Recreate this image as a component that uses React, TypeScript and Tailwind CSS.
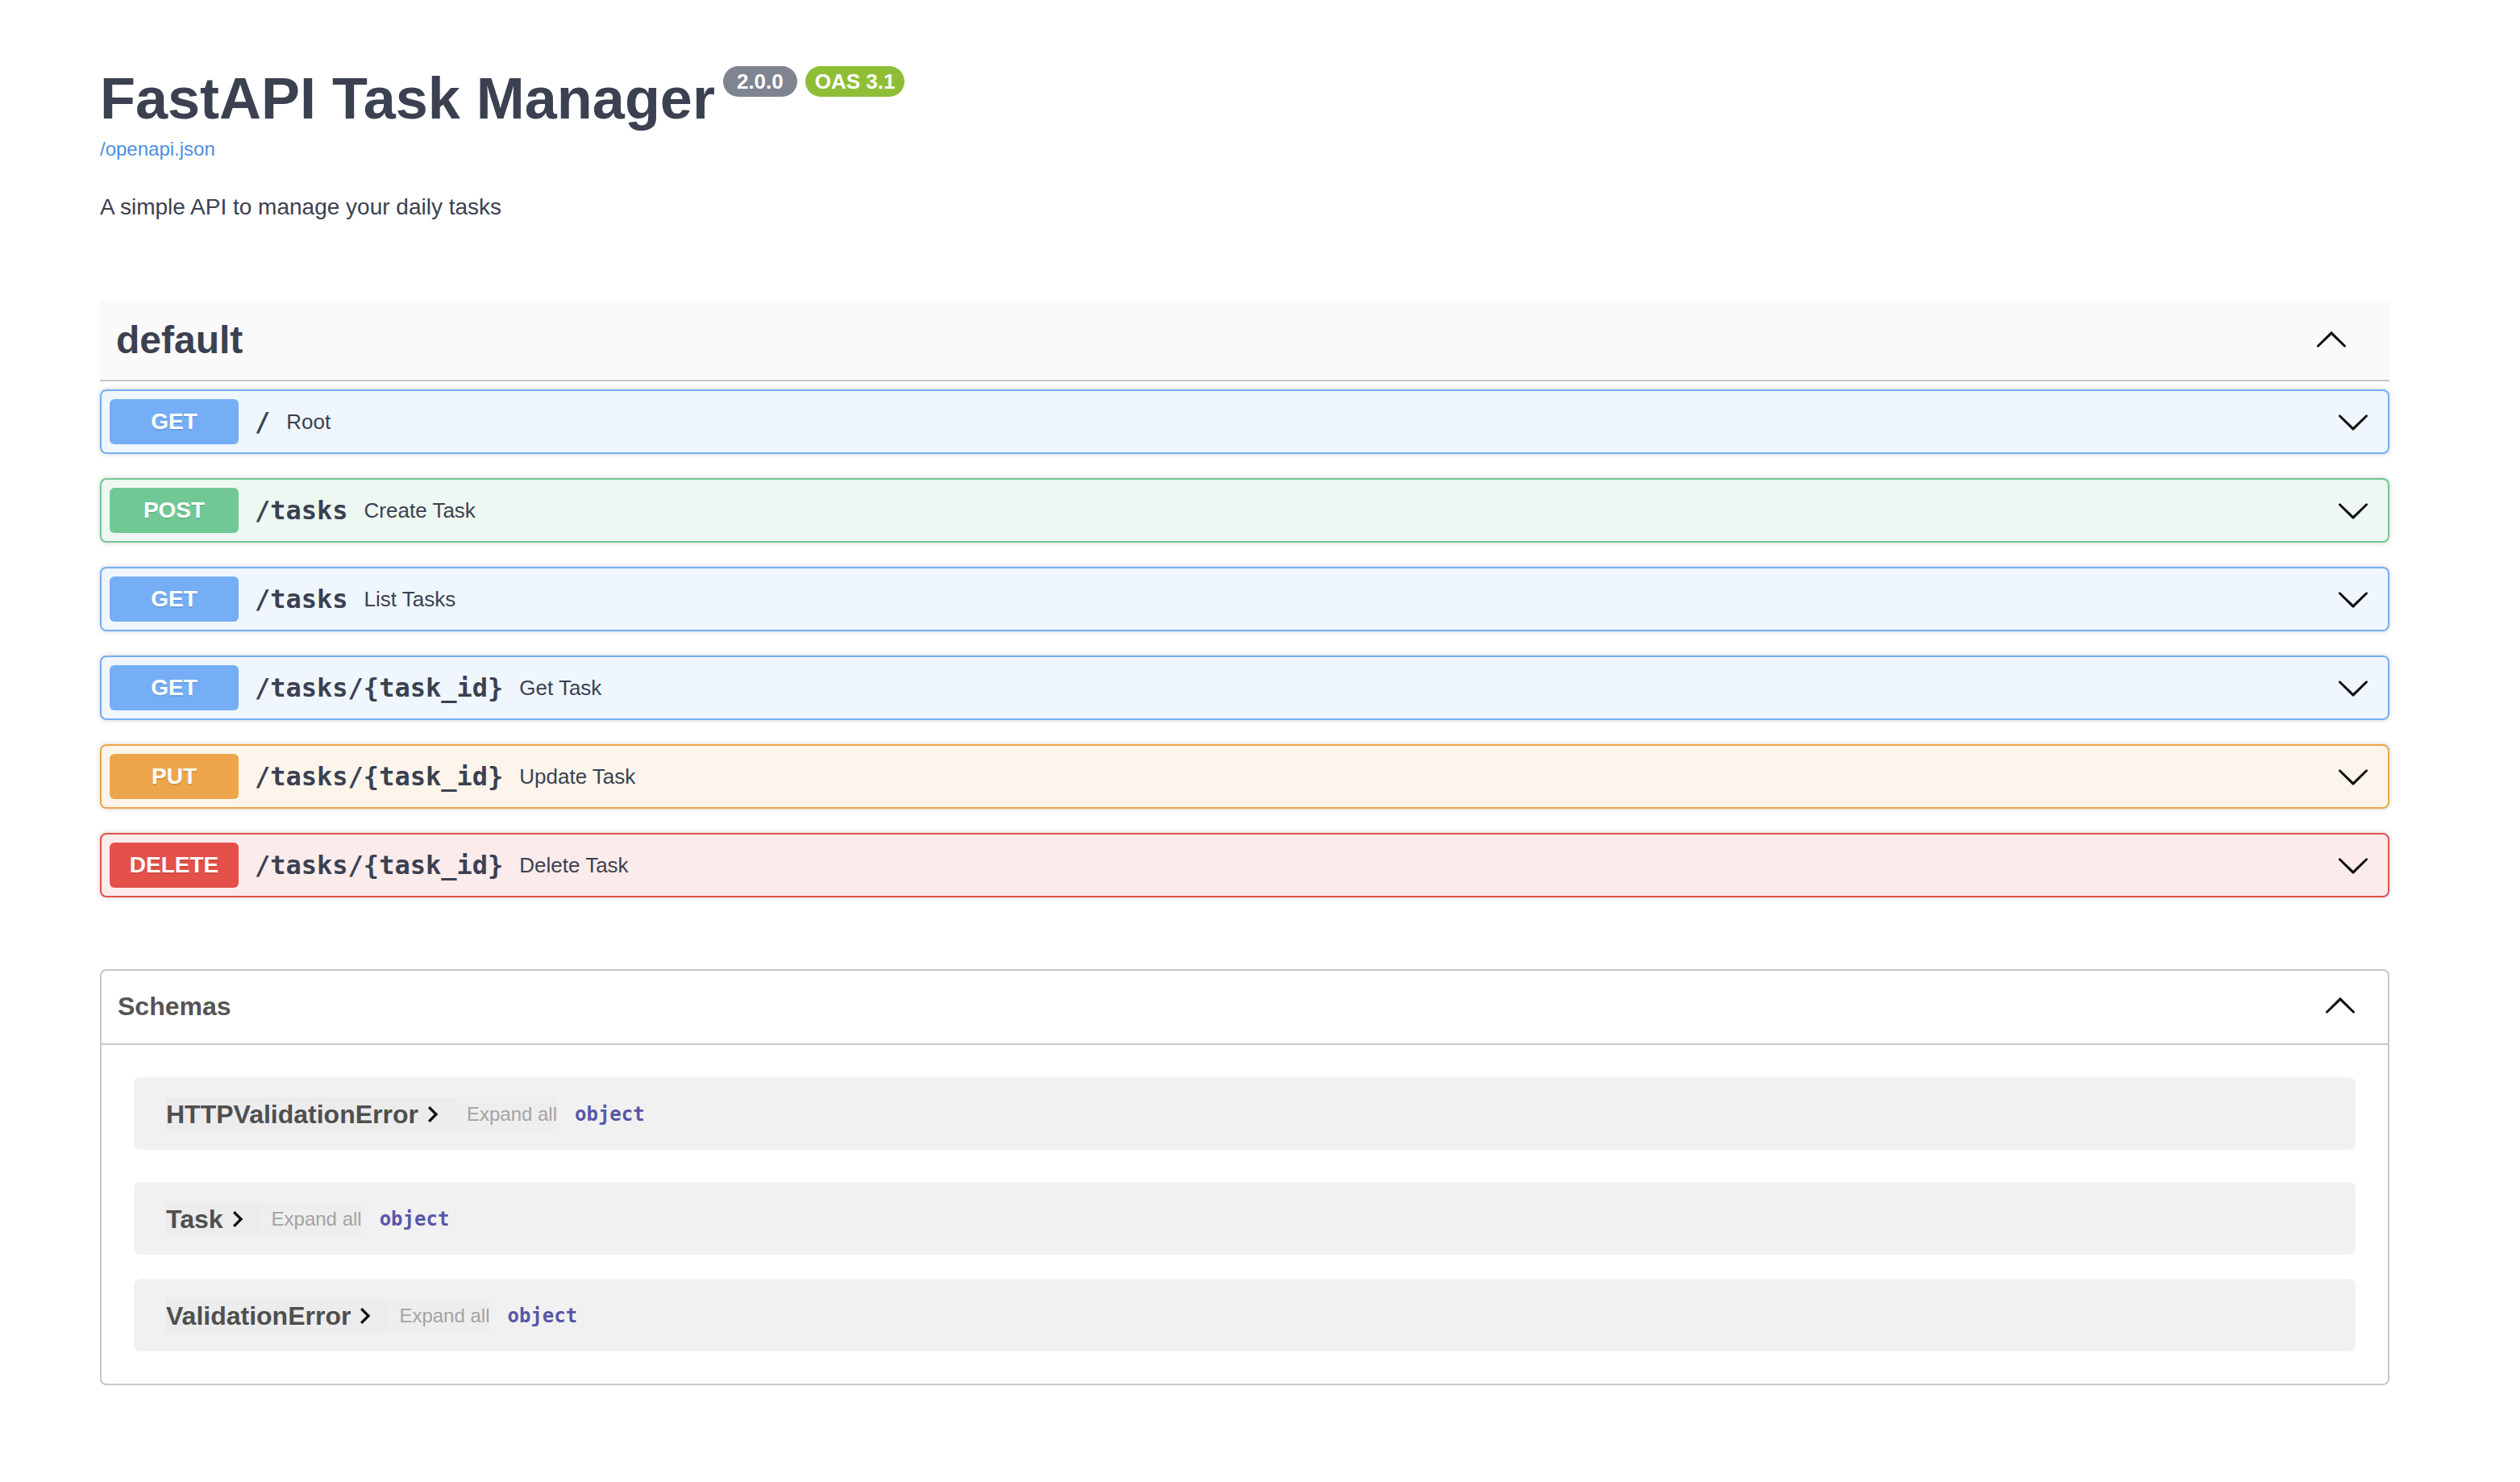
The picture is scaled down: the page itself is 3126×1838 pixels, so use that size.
import React from 'react';

type Method = 'GET' | 'POST' | 'PUT' | 'DELETE';

type Operation = {
  method: Method;
  path: string;
  summary: string;
};

const methodStyles: Record<Method, { block: string; badge: string }> = {
  GET: { block: 'border-[#75aef5] bg-[#eff6fe]', badge: 'bg-[#75aef5]' },
  POST: { block: 'border-[#71c896] bg-[#eef8f2]', badge: 'bg-[#71c896]' },
  PUT: { block: 'border-[#eda54b] bg-[#fdf5eb]', badge: 'bg-[#eda54b]' },
  DELETE: { block: 'border-[#e4504a] bg-[#fbebeb]', badge: 'bg-[#e4504a]' },
};

const operations: Operation[] = [
  { method: 'GET', path: '/', summary: 'Root' },
  { method: 'POST', path: '/tasks', summary: 'Create Task' },
  { method: 'GET', path: '/tasks', summary: 'List Tasks' },
  { method: 'GET', path: '/tasks/{task_id}', summary: 'Get Task' },
  { method: 'PUT', path: '/tasks/{task_id}', summary: 'Update Task' },
  { method: 'DELETE', path: '/tasks/{task_id}', summary: 'Delete Task' },
];

const schemas = ['HTTPValidationError', 'Task', 'ValidationError'];

const Arrow: React.FC<{ up?: boolean; className?: string }> = ({ up = false, className = '' }) => (
  <svg
    viewBox="0 0 20 20"
    className={`w-[42px] h-[42px] shrink-0 ${up ? 'rotate-180' : ''} ${className}`}
    fill="#111"
  >
    <path d="M17.418 6.109c.272-.268.709-.268.979 0s.271.701 0 .969l-7.908 7.83c-.27.268-.707.268-.979 0l-7.908-7.83c-.27-.268-.27-.701 0-.969.271-.268.709-.268.979 0L10 13.25l7.418-7.141z" />
  </svg>
);

const OpBlock: React.FC<{ op: Operation }> = ({ op }) => {
  const s = methodStyles[op.method];
  return (
    <div
      className={`flex items-center h-[80px] border-2 rounded-[8px] px-[10px] shadow-[0_0_6px_rgba(0,0,0,0.19)] ${s.block}`}
    >
      <div
        className={`w-[160px] h-[56px] rounded-[6px] flex items-center justify-center text-white text-[28px] font-bold [text-shadow:0_2px_0_rgba(0,0,0,0.1)] ${s.badge}`}
      >
        {op.method}
      </div>
      <span className="px-[20px] font-['DejaVu_Sans_Mono',monospace] font-bold text-[32px] text-[#3b4151]">
        {op.path}
      </span>
      <span className="flex-1 text-[26px] text-[#3b4151]">{op.summary}</span>
      <Arrow className="mr-[12px]" />
    </div>
  );
};

const SchemaRow: React.FC<{ name: string }> = ({ name }) => (
  <div className="flex items-center h-[90px] pl-[40px] pt-[2px] rounded-[8px] bg-[#f1f1f1]">
    <span className="flex items-center h-[42px] pr-[20px] bg-[#ececec] text-[32px] font-bold text-[#4f4f4f]">
      {name}
      <svg viewBox="8 6 9 12" className="w-[15px] h-[20px] ml-[11px]" fill="#111">
        <path d="M10 6L8.59 7.41 13.17 12l-4.58 4.59L10 18l6-6z" />
      </svg>
    </span>
    <span className="flex items-center h-[42px] pl-[14px] bg-[#eeeeee] text-[24px] text-[#a3a3a3]">
      Expand all
    </span>
    <span className="ml-[22px] font-['DejaVu_Sans_Mono',monospace] font-bold text-[24px] text-[#5757a8]">
      object
    </span>
  </div>
);

export default function App() {
  return (
    <div className="min-h-screen bg-white font-['Liberation_Sans',Arial,sans-serif] text-[#3b4151]">
      <div className="w-[2840px] ml-[124px] pt-[82px] pb-[120px]">
        <div className="flex items-start">
          <h1 className="text-[72px] font-bold leading-[80px]">FastAPI Task Manager</h1>
          <span className="ml-[10px] h-[38px] px-[17px] rounded-full bg-[#7f8491] text-white text-[26px] font-bold flex items-center">
            2.0.0
          </span>
          <span className="ml-[10px] h-[38px] px-[12px] rounded-full bg-[#8fbe36] text-white text-[26px] font-bold flex items-center">
            OAS 3.1
          </span>
        </div>
        <div className="mt-[9px] text-[24px] leading-[28px] text-[#4d8fe0]">/openapi.json</div>
        <p className="mt-[42px] text-[28px] leading-[32px]">A simple API to manage your daily tasks</p>

        <section className="mt-[100px]">
          <div className="flex items-center py-[20px] pl-[20px] pr-[51px] bg-[#fafafa] border-b-2 border-[#c5c6ca]">
            <h3 className="flex-1 text-[48px] font-bold leading-[58px]">default</h3>
            <Arrow up />
          </div>
          <div className="mt-[10px] flex flex-col gap-[30px]">
            {operations.map((op, i) => (
              <OpBlock key={i} op={op} />
            ))}
          </div>
        </section>

        <section className="mt-[89px] border-2 border-[#c6c7cc] rounded-[8px]">
          <div className="flex items-center h-[92px] pl-[20px] pr-[38px] pb-[2px] border-b-2 border-[#c6c7cc]">
            <h4 className="flex-1 text-[32px] font-bold text-[#555555]">Schemas</h4>
            <Arrow up />
          </div>
          <div className="px-[40px] pt-[40px] pb-[40px] flex flex-col">
            {schemas.map((name, i) => (
              <div key={name} className={i === 0 ? 'mb-[40px]' : i === 1 ? 'mb-[30px]' : ''}>
                <SchemaRow name={name} />
              </div>
            ))}
          </div>
        </section>
      </div>
    </div>
  );
}
